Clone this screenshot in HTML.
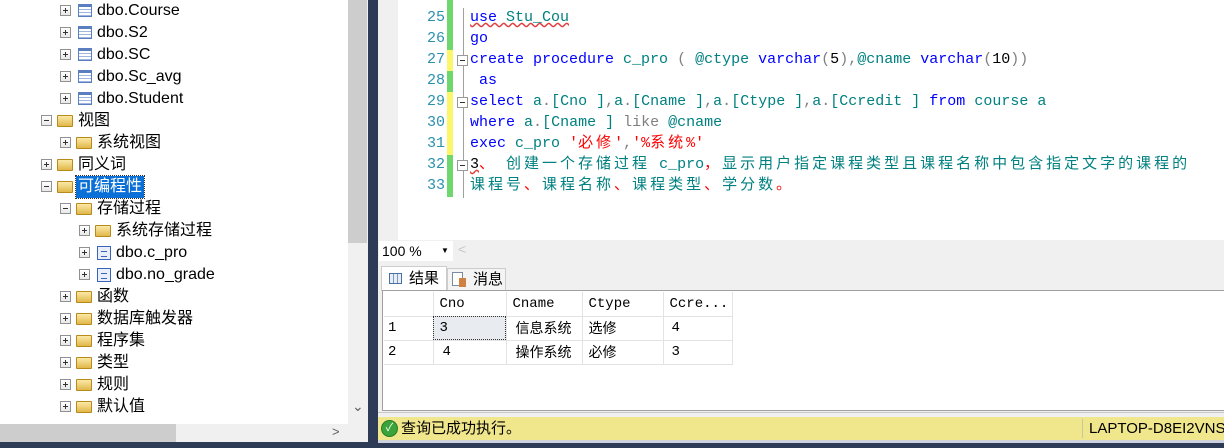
<!DOCTYPE html>
<html><head><meta charset="utf-8"><style>
*{margin:0;padding:0;box-sizing:border-box}
html,body{width:1224px;height:448px;overflow:hidden}
body{background:#2d3b56;position:relative;font-family:"Liberation Sans","Noto Sans CJK SC",sans-serif;white-space:nowrap}
.abs{position:absolute}
#tree{left:0;top:0;width:348px;height:424px;background:#fff}
.row{position:absolute;height:22px;font-size:16px;line-height:22px;color:#000;white-space:nowrap}
.pb{position:absolute;top:5px;width:11px;height:11px;border:1px solid #919191;background:linear-gradient(#fff,#e8e8e8)}
.pb:before{content:"";position:absolute;left:2px;top:4px;width:5px;height:1px;background:#333}
.pb.p:after{content:"";position:absolute;left:4px;top:2px;width:1px;height:5px;background:#333}
.fold{position:absolute;top:5px;width:16px;height:12px;background:linear-gradient(#fbe9a8,#e0b84a);border:1px solid #b88a1c;border-radius:1px}
.tbl{position:absolute;top:4px;width:14px;height:13px;border:1px solid #5a7fc0;background:repeating-linear-gradient(#fff 0 2px,#9fb6df 2px 3px);border-top:3px solid #5a7fc0}
.sp{position:absolute;top:4px;width:14px;height:14px;border:1px solid #3a63b8;background:#e8eefa}
.sp:after{content:"";position:absolute;left:3px;top:4px;width:6px;height:4px;border-top:1px solid #3a63b8;border-bottom:1px solid #3a63b8}
.lab{position:absolute;top:0}
.code{position:absolute;font-family:"Liberation Mono","Noto Sans CJK SC",monospace;font-size:15px;line-height:21px;white-space:pre}
.ln{position:absolute;left:410px;width:35px;text-align:right;color:#2b91af;font-family:"Liberation Mono",monospace;font-size:15px;line-height:21px}
.k{color:#0000ff}.t{color:#008080}.g{color:#808080}.r{color:#ff0000}
.c{letter-spacing:3px}
td{border-right:1px solid #e3e3e3;border-bottom:1px solid #e3e3e3;height:24px;font-family:"Liberation Mono","Noto Sans CJK SC",monospace;font-size:14px;padding-left:6px}
</style></head><body>
<div id="tree" class="abs">
 <div class="row" style="top:0"><div class="pb p" style="left:60px"></div><div class="tbl" style="left:78px"></div><span class="lab" style="left:97px">dbo.Course</span></div>
 <div class="row" style="top:22px"><div class="pb p" style="left:60px"></div><div class="tbl" style="left:78px"></div><span class="lab" style="left:97px">dbo.S2</span></div>
 <div class="row" style="top:44px"><div class="pb p" style="left:60px"></div><div class="tbl" style="left:78px"></div><span class="lab" style="left:97px">dbo.SC</span></div>
 <div class="row" style="top:66px"><div class="pb p" style="left:60px"></div><div class="tbl" style="left:78px"></div><span class="lab" style="left:97px">dbo.Sc_avg</span></div>
 <div class="row" style="top:88px"><div class="pb p" style="left:60px"></div><div class="tbl" style="left:78px"></div><span class="lab" style="left:97px">dbo.Student</span></div>
 <div class="row" style="top:110px"><div class="pb" style="left:41px"></div><div class="fold" style="left:57px"></div><span class="lab" style="left:78px">视图</span></div>
 <div class="row" style="top:132px"><div class="pb p" style="left:60px"></div><div class="fold" style="left:76px"></div><span class="lab" style="left:97px">系统视图</span></div>
 <div class="row" style="top:154px"><div class="pb p" style="left:41px"></div><div class="fold" style="left:57px"></div><span class="lab" style="left:78px">同义词</span></div>
 <div class="row" style="top:176px"><div class="pb" style="left:41px"></div><div class="fold" style="left:57px"></div><span class="lab" style="left:76px;background:#0a6fd6;color:#fff;padding:0 2px;outline:1px dotted #333">可编程性</span></div>
 <div class="row" style="top:198px"><div class="pb" style="left:60px"></div><div class="fold" style="left:76px"></div><span class="lab" style="left:97px">存储过程</span></div>
 <div class="row" style="top:220px"><div class="pb p" style="left:79px"></div><div class="fold" style="left:95px"></div><span class="lab" style="left:116px">系统存储过程</span></div>
 <div class="row" style="top:242px"><div class="pb p" style="left:79px"></div><div class="sp" style="left:97px"></div><span class="lab" style="left:116px">dbo.c_pro</span></div>
 <div class="row" style="top:264px"><div class="pb p" style="left:79px"></div><div class="sp" style="left:97px"></div><span class="lab" style="left:116px">dbo.no_grade</span></div>
 <div class="row" style="top:286px"><div class="pb p" style="left:60px"></div><div class="fold" style="left:76px"></div><span class="lab" style="left:97px">函数</span></div>
 <div class="row" style="top:308px"><div class="pb p" style="left:60px"></div><div class="fold" style="left:76px"></div><span class="lab" style="left:97px">数据库触发器</span></div>
 <div class="row" style="top:330px"><div class="pb p" style="left:60px"></div><div class="fold" style="left:76px"></div><span class="lab" style="left:97px">程序集</span></div>
 <div class="row" style="top:352px"><div class="pb p" style="left:60px"></div><div class="fold" style="left:76px"></div><span class="lab" style="left:97px">类型</span></div>
 <div class="row" style="top:374px"><div class="pb p" style="left:60px"></div><div class="fold" style="left:76px"></div><span class="lab" style="left:97px">规则</span></div>
 <div class="row" style="top:396px"><div class="pb p" style="left:60px"></div><div class="fold" style="left:76px"></div><span class="lab" style="left:97px">默认值</span></div>
</div>
<div class="abs" style="left:348px;top:0;width:20px;height:424px;background:#f0f0f0"></div>
<div class="abs" style="left:348px;top:0;width:19px;height:243px;background:#cdcdcd"></div>
<div class="abs" style="left:352px;top:398px;color:#606060;font-size:14px">&#8964;</div>
<div class="abs" style="left:0;top:424px;width:368px;height:18px;background:#f0f0f0"></div>
<div class="abs" style="left:0;top:424px;width:176px;height:18px;background:#cdcdcd"></div>
<div class="abs" style="left:332px;top:424px;color:#606060;font-size:13px">&gt;</div>

<div class="abs" style="left:378px;top:0;width:846px;height:240px;background:#fff"></div>
<div class="abs" style="left:378px;top:0;width:20px;height:240px;background:#f0f0f0"></div>
<div class="abs" style="left:447px;top:0;width:6px;height:50px;background:#6ed86e"></div>
<div class="abs" style="left:447px;top:50px;width:6px;height:21px;background:#fdf56a"></div>
<div class="abs" style="left:447px;top:71px;width:6px;height:21px;background:#6ed86e"></div>
<div class="abs" style="left:447px;top:92px;width:6px;height:63px;background:#fdf56a"></div>
<div class="abs" style="left:447px;top:155px;width:6px;height:42px;background:#6ed86e"></div>
<div class="ln" style="top:7px">25<br>26<br>27<br>28<br>29<br>30<br>31<br>32<br>33</div>
<div class="abs" style="left:463px;top:8px;width:1px;height:190px;background:#a0a0a0"></div>
<div class="abs" style="left:457px;top:55px;width:11px;height:11px;border:1px solid #999;background:#fff"><div style="margin:4px 2px;height:1px;background:#333"></div></div>
<div class="abs" style="left:457px;top:97px;width:11px;height:11px;border:1px solid #999;background:#fff"><div style="margin:4px 2px;height:1px;background:#333"></div></div>
<div class="abs" style="left:457px;top:160px;width:11px;height:11px;border:1px solid #999;background:#fff"><div style="margin:4px 2px;height:1px;background:#333"></div></div>
<div class="code" style="left:470px;top:7px"><span class="k" style="text-decoration:underline wavy #e04040">use <span class="t">Stu_Cou</span></span>
<span class="k">go</span>
<span class="k">create procedure</span> <span class="t">c_pro</span> <span class="g">(</span> <span class="t">@ctype</span> <span class="k">varchar</span><span class="g">(</span>5<span class="g">),</span><span class="t">@cname</span> <span class="k">varchar</span><span class="g">(</span>10<span class="g">))</span>
 <span class="k">as</span>
<span class="k">select</span> <span class="t">a</span><span class="g">.</span><span class="t">[Cno ]</span><span class="g">,</span><span class="t">a</span><span class="g">.</span><span class="t">[Cname ]</span><span class="g">,</span><span class="t">a</span><span class="g">.</span><span class="t">[Ctype ]</span><span class="g">,</span><span class="t">a</span><span class="g">.</span><span class="t">[Ccredit ]</span> <span class="k">from</span> <span class="t">course a</span>
<span class="k">where</span> <span class="t">a</span><span class="g">.</span><span class="t">[Cname ]</span> <span class="g">like</span> <span class="t">@cname</span>
<span class="k">exec</span> <span class="t">c_pro</span> <span class="r">'<span class="c">必修</span>'</span><span class="g">,</span><span class="r">'%<span class="c">系统</span>%'</span>
<span style="text-decoration:underline wavy #e04040">3</span><span class="r c">、</span> <span class="t"><span class="c">创建一个存储过程</span> c_pro</span><span class="r c">，</span><span class="t c">显示用户指定课程类型且课程名称中包含指定文字的课程的</span>
<span class="t c">课程号</span><span class="r c">、</span><span class="t c">课程名称</span><span class="r c">、</span><span class="t c">课程类型</span><span class="r c">、</span><span class="t c">学分数</span><span class="r c">。</span></div>

<div class="abs" style="left:378px;top:240px;width:846px;height:177px;background:#f0f0f0"></div>
<div class="abs" style="left:379px;top:241px;width:74px;height:20px;background:#fff;font-size:14px;line-height:20px;padding-left:3px">100 %<span style="position:absolute;left:62px;top:0;font-size:8px">&#9660;</span></div>
<div class="abs" style="left:458px;top:241px;color:#c8c8c8;font-size:14px">&lt;</div>
<div class="abs" style="left:381px;top:266px;width:66px;height:25px;background:#fff;border:1px solid #ccc;border-bottom:none;font-size:15px;line-height:23px;padding-left:27px">结果</div>
<div class="abs" style="left:389px;top:273px;width:13px;height:11px;border:1px solid #4a6fa5;background:repeating-linear-gradient(90deg,#e8eef8 0 3px,#7d96c0 3px 4px)"></div>
<div class="abs" style="left:447px;top:268px;width:59px;height:23px;background:#f4f4f4;border:1px solid #ccc;font-size:15px;line-height:21px;padding-left:25px">消息</div>
<div class="abs" style="left:452px;top:272px;width:11px;height:14px;border:1px solid #7a8aa0;background:#fff"></div>
<div class="abs" style="left:459px;top:278px;width:7px;height:9px;background:#d08040"></div>
<div class="abs" style="left:382px;top:290px;width:842px;height:121px;background:#fff;border:1px solid #a0a0a0;border-right:none"></div>
<table class="abs" style="left:384px;top:292px;border-collapse:collapse">
<tr><td style="width:49px"></td><td style="width:73px">Cno</td><td style="width:76px">Cname</td><td style="width:81px">Ctype</td><td style="width:69px">Ccre...</td></tr>
<tr><td style="padding-left:4px">1</td><td style="background:#e8ecf0;outline:1px dotted #333;outline-offset:-1px">3</td><td style="padding-left:9px">信息系统</td><td>选修</td><td style="padding-left:8px">4</td></tr>
<tr><td style="padding-left:4px">2</td><td style="padding-left:9px">4</td><td style="padding-left:9px">操作系统</td><td>必修</td><td style="padding-left:8px">3</td></tr>
</table>
<div class="abs" style="left:378px;top:412px;width:846px;height:5px;background:#f0f0f0;border-top:1px solid #c8c8c8"></div>
<div class="abs" style="left:378px;top:417px;width:846px;height:23px;background:#f0e68c;font-size:15px;line-height:23px;padding-left:23px">查询已成功执行。</div>
<div class="abs" style="left:381px;top:420px;width:17px;height:17px;border-radius:50%;background:#3aa43a;border:1px solid #2a7a2a;color:#fff;font-size:11px;line-height:15px;text-align:center">✓</div>
<div class="abs" style="left:1082px;top:419px;width:1px;height:19px;background:#c8c8a0"></div>
<div class="abs" style="left:1089px;top:417px;width:200px;font-size:15px;line-height:23px;white-space:nowrap">LAPTOP-D8EI2VNS</div>
<div class="abs" style="left:378px;top:440px;width:846px;height:3px;background:#cdd2dc"></div>
</body></html>
